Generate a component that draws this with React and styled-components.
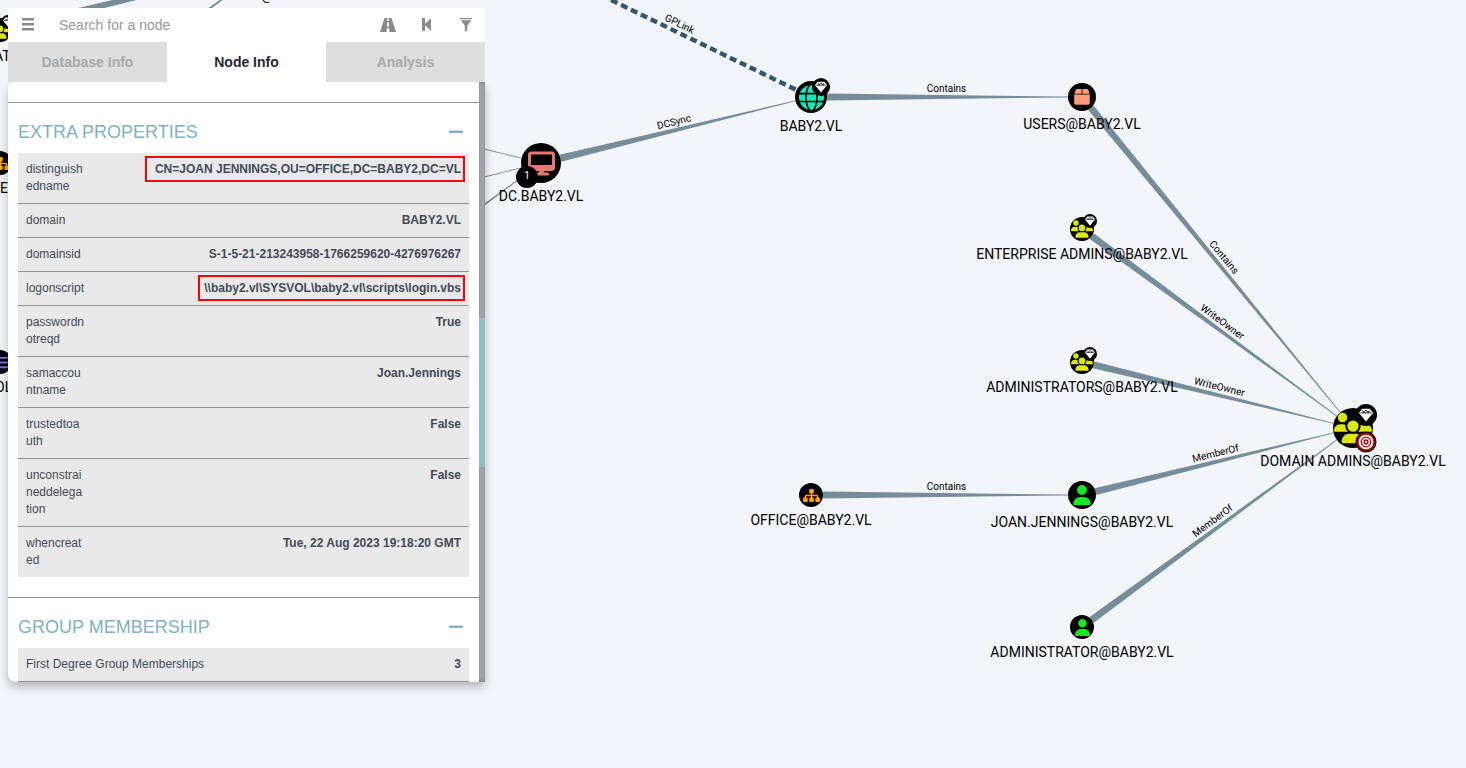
import React from "react";
import styled, { createGlobalStyle } from "styled-components";
import {
  FaDesktop,
  FaGlobe,
  FaList,
  FaSitemap,
  FaUser,
  FaUsers
} from "react-icons/fa6";

function BoxIcon({ size }) {
  return (
    <svg width={size} height={size} viewBox="0 0 16 16" fill="currentColor">
      <path d="M3 0h4.600v4.700H.4L1.600 1Q2 0 3 0zM8.400 0H13q1 0 1.400 1l1.200 3.700H8.400z" />
      <path d="M.2 5.500h15.600V14q0 1.800-1.800 1.800H2Q.2 15.800.2 14z" />
    </svg>
  );
}

function GemIcon({ size }) {
  return (
    <svg width={size} height={size} viewBox="0 0 14 14">
      <path fill="#fff" d="M3 .8h8L14 5 7 13.500 0 5z" />
      <path
        fill="none"
        stroke="#000"
        strokeWidth="0.9"
        d="M1.500 4.900h11M3.500 2.200L4.700 4.700 7 2l2.300 2.700 1.200-2.500"
      />
    </svg>
  );
}

const nodes = [
  { id: "left-group", x: 0, y: 30, r: 12, icon: FaUsers, size: 22, color: "#dbe712", gem: 7 },
  { id: "left-ou", x: 0, y: 163, r: 12, icon: FaSitemap, size: 17, color: "#ffa500" },
  { id: "left-gpo", x: 0, y: 362, r: 12, icon: FaList, size: 15, color: "#7b68ee" },
  { id: "dc", x: 541, y: 163, r: 20, icon: FaDesktop, size: 27, color: "#e67873", label: "DC.BABY2.VL", count: 1 },
  { id: "domain", x: 811, y: 97, r: 16, icon: FaGlobe, size: 25, color: "#17e6b9", label: "BABY2.VL", gem: 9 },
  { id: "users", x: 1082, y: 97, r: 14, icon: BoxIcon, size: 16, color: "#ff9a7b", label: "USERS@BABY2.VL" },
  { id: "ea", x: 1082, y: 229, r: 12, icon: FaUsers, size: 22, color: "#dbe712", label: "ENTERPRISE ADMINS@BABY2.VL", gem: 7 },
  { id: "admins", x: 1082, y: 362, r: 12, icon: FaUsers, size: 22, color: "#dbe712", label: "ADMINISTRATORS@BABY2.VL", gem: 7 },
  { id: "da", x: 1353, y: 428, r: 20, icon: FaUsers, size: 38, color: "#dbe712", label: "DOMAIN ADMINS@BABY2.VL", gem: 11, target: true },
  { id: "office", x: 811, y: 495, r: 12, icon: FaSitemap, size: 17, color: "#ffa500", label: "OFFICE@BABY2.VL" },
  { id: "joan", x: 1082, y: 495, r: 14, icon: FaUser, size: 20, color: "#17e625", label: "JOAN.JENNINGS@BABY2.VL" },
  { id: "administrator", x: 1082, y: 627, r: 12, icon: FaUser, size: 17, color: "#17e625", label: "ADMINISTRATOR@BABY2.VL" }
];

// points outside the visible canvas that edges still run to
const anchors = {
  top: { x: 541, y: -100, r: 19 },
  policy: { x: 541, y: -34, r: 12 },
  lower: { x: 0, y: 296, r: 12 },
  middle: { x: 270, y: 362, r: 12 },
  upper: { x: 270, y: -36, r: 12 },
  behind: { x: 0, y: 163, r: 12 }
};

const edges = [
  { from: "left-group", to: "dc" },
  { from: "left-group", to: "top" },
  { from: "lower", to: "dc" },
  { from: "middle", to: "dc" },
  { from: "behind", to: "upper" },
  { from: "policy", to: "domain", label: "GPLink", dashed: true },
  { from: "dc", to: "domain", label: "DCSync" },
  { from: "domain", to: "users", label: "Contains" },
  { from: "users", to: "da", label: "Contains" },
  { from: "ea", to: "da", label: "WriteOwner" },
  { from: "admins", to: "da", label: "WriteOwner" },
  { from: "joan", to: "da", label: "MemberOf" },
  { from: "administrator", to: "da", label: "MemberOf" },
  { from: "office", to: "joan", label: "Contains" }
];

const clippedLabels = [
  { text: "AT", x: -6, y: 48 },
  { text: "E", x: 0, y: 180 },
  { text: "OL", x: -5, y: 379 },
  { text: "@", x: 261, y: -13 }
];

const properties = [
  { name: "distinguishedname", value: "CN=JOAN JENNINGS,OU=OFFICE,DC=BABY2,DC=VL", mark: 10 },
  { name: "domain", value: "BABY2.VL" },
  { name: "domainsid", value: "S-1-5-21-213243958-1766259620-4276976267" },
  { name: "logonscript", value: "\\\\baby2.vl\\SYSVOL\\baby2.vl\\scripts\\login.vbs", mark: 6 },
  { name: "passwordnotreqd", value: "True" },
  { name: "samaccountname", value: "Joan.Jennings" },
  { name: "trustedtoauth", value: "False" },
  { name: "unconstraineddelegation", value: "False" },
  { name: "whencreated", value: "Tue, 22 Aug 2023 19:18:20 GMT" }
];

const findNode = id => nodes.find(node => node.id === id) || anchors[id];

function Edge({ from, to, label, dashed }) {
  const a = findNode(from);
  const b = findNode(to);
  const length = Math.hypot(b.x - a.x, b.y - a.y);
  const ux = (b.x - a.x) / length;
  const uy = (b.y - a.y) / length;
  const angle = (Math.atan2(uy, ux) * 180) / Math.PI;
  const x1 = a.x + ux * a.r;
  const y1 = a.y + uy * a.r;
  const x2 = b.x - ux * b.r;
  const y2 = b.y - uy * b.r;
  const wide = 3.5;
  const thin = 0.4;
  const points = [
    [x1 - uy * wide, y1 + ux * wide],
    [x2 - uy * thin, y2 + ux * thin],
    [x2 + uy * thin, y2 - ux * thin],
    [x1 + uy * wide, y1 - ux * wide]
  ].join(" ");
  return (
    <g>
      {dashed ? (
        <DashedLine x1={x1} y1={y1} x2={x2} y2={y2} />
      ) : (
        <Taper points={points} />
      )}
      {label && (
        <EdgeLabel
          transform={`translate(${(a.x + b.x) / 2} ${(a.y + b.y) / 2}) rotate(${angle})`}
          y="-5"
        >
          {label}
        </EdgeLabel>
      )}
    </g>
  );
}

function Node({ x, y, r, icon: Icon, size, color, label, gem, target, count }) {
  return (
    <NodeWrapper style={{ left: x, top: y - r }}>
      <Disc $r={r} $color={color}>
        <Icon size={size} />
        {gem && (
          <GemBadge $r={gem} $offset={r}>
            <GemIcon size={gem + 3} />
          </GemBadge>
        )}
        {target && (
          <TargetBadge viewBox="0 0 22 22" aria-hidden="true">
            <circle cx="11" cy="11" r="10.5" fill="#000" />
            <circle cx="11" cy="11" r="9.6" fill="#a3070c" />
            <circle cx="11" cy="11" r="6.4" fill="none" stroke="#fff" strokeWidth="1.9" />
            <circle cx="11" cy="11" r="3.4" fill="none" stroke="#fff" strokeWidth="1.5" />
            <circle cx="11" cy="11" r="1.2" fill="#fff" />
          </TargetBadge>
        )}
        {count && <CountBadge>{count}</CountBadge>}
      </Disc>
      {label && <NodeLabel>{label}</NodeLabel>}
    </NodeWrapper>
  );
}

function Section({ title, children }) {
  return (
    <SectionWrapper>
      <SectionHeader>
        <h2>{title}</h2>
        <CollapseButton aria-label={`Collapse ${title}`} />
      </SectionHeader>
      {children}
    </SectionWrapper>
  );
}

export default function App() {
  return (
    <Canvas>
      <GlobalStyle />
      <EdgeLayer>
        {edges.map(edge => (
          <Edge key={`${edge.from}-${edge.to}`} {...edge} />
        ))}
      </EdgeLayer>
      {nodes.map(({ id, ...node }) => (
        <Node key={id} {...node} />
      ))}
      {clippedLabels.map(({ text, x, y }) => (
        <LooseLabel key={text} style={{ left: x, top: y }}>
          {text}
        </LooseLabel>
      ))}
      <SidePanel>
        <SearchBar>
          <IconButton aria-label="Menu">
            <svg width="12" height="13" viewBox="0 0 12 13">
              <path d="M0 0h12v2.400H0zM0 5h12v2.400H0zM0 10h12v2.400H0z" />
            </svg>
          </IconButton>
          <SearchInput type="text" aria-label="Search for a node" placeholder="Search for a node" />
          <IconButton aria-label="Pathfinding">
            <svg width="16" height="14" viewBox="0 0 16 14">
              <path d="M4.500 0h2.900L7.200 3h1.600L8.600 0h2.900L16 14H9.400L9.100 10H6.900L6.600 14H0zM7.200 4.200L7 8.500h2L8.800 4.200z" />
            </svg>
          </IconButton>
          <IconButton aria-label="Back">
            <svg width="10" height="13" viewBox="0 0 10 13">
              <path d="M0 0h3v5.700L9 .3v12.400L3 7.300V13H0z" />
            </svg>
          </IconButton>
          <IconButton aria-label="Filter">
            <svg width="12" height="14" viewBox="0 0 12 14">
              <path d="M0 0h12v1.200H0zM.8 2.200h10.400L7.400 7.500v4.500L4.800 14V7.500z" />
            </svg>
          </IconButton>
        </SearchBar>
        <Tabs>
          <Tab>Database Info</Tab>
          <Tab $active>Node Info</Tab>
          <Tab>Analysis</Tab>
        </Tabs>
        <PanelBody>
          <PanelContent>
            <Section title="EXTRA PROPERTIES">
              <PropertyTable>
                <tbody>
                  {properties.map(({ name, value, mark }) => (
                    <tr key={name}>
                      <NameCell $narrow scope="row">{name}</NameCell>
                      <ValueCell>{mark ? <Marked $left={mark}>{value}</Marked> : value}</ValueCell>
                    </tr>
                  ))}
                </tbody>
              </PropertyTable>
            </Section>
            <Section title="GROUP MEMBERSHIP">
              <PropertyTable $ruled>
                <tbody>
                  <tr>
                    <NameCell scope="row">First Degree Group Memberships</NameCell>
                    <ValueCell>3</ValueCell>
                  </tr>
                </tbody>
              </PropertyTable>
            </Section>
          </PanelContent>
          <ScrollTrack>
            <ScrollThumb />
          </ScrollTrack>
        </PanelBody>
      </SidePanel>
    </Canvas>
  );
}

const GlobalStyle = createGlobalStyle`
  * {
    box-sizing: border-box;
  }
  body {
    margin: 0;
    background: #f2f5fa;
    font-family: "Liberation Sans", Arial, sans-serif;
  }
`;

const Canvas = styled.main`
  position: relative;
  min-height: 100vh;
  padding: 8px;
  overflow: hidden;
`;

const EdgeLayer = styled.svg`
  position: absolute;
  inset: 0;
  width: 100%;
  height: 100%;
`;

const Taper = styled.polygon`
  fill: #768d99;
`;

const DashedLine = styled.line`
  stroke: #34566a;
  stroke-width: 4.4;
  stroke-dasharray: 7 4;
`;

const EdgeLabel = styled.text`
  font-family: Roboto, sans-serif;
  font-size: 10px;
  text-anchor: middle;
  fill: #000;
`;

const NodeWrapper = styled.div`
  position: absolute;
  display: flex;
  flex-direction: column;
  align-items: center;
  width: 0;
`;

const Disc = styled.div`
  position: relative;
  display: flex;
  flex-shrink: 0;
  align-items: center;
  justify-content: center;
  width: ${({ $r }) => $r * 2}px;
  height: ${({ $r }) => $r * 2}px;
  border-radius: 50%;
  background: #000;
  color: ${({ $color }) => $color};
  svg {
    flex-shrink: 0;
  }
`;

const GemBadge = styled.span`
  position: absolute;
  left: ${({ $r, $offset }) => Math.floor($offset * 1.68) - $r}px;
  top: ${({ $r, $offset }) => Math.ceil($offset * 0.32) - $r}px;
  display: flex;
  align-items: center;
  justify-content: center;
  width: ${({ $r }) => $r * 2}px;
  height: ${({ $r }) => $r * 2}px;
  border-radius: 50%;
  background: #000;
  color: #fff;
`;

const TargetBadge = styled.svg`
  position: absolute;
  right: -4px;
  bottom: -5px;
  width: 22px;
  height: 22px;
`;

const CountBadge = styled.span`
  position: absolute;
  left: -5px;
  bottom: -5px;
  width: 22px;
  height: 22px;
  border-radius: 50%;
  background: #000;
  color: #fff;
  font: 10px/20px Roboto, sans-serif;
  text-align: center;
`;

const NodeLabel = styled.span`
  margin-top: 5px;
  color: #000;
  font: 14px/16px Roboto, sans-serif;
  white-space: nowrap;
`;

const LooseLabel = styled(NodeLabel)`
  position: absolute;
  margin: 0;
`;

const SidePanel = styled.aside`
  position: relative;
  width: 477px;
  max-width: 100%;
`;

const SearchBar = styled.div`
  display: flex;
  height: 34px;
  background: #fff;
`;

const IconButton = styled.button`
  display: flex;
  align-items: center;
  justify-content: center;
  width: 39px;
  padding: 0 0 1px;
  border: 0;
  background: none;
  svg {
    fill: #888a92;
  }
`;

const SearchInput = styled.input`
  flex: 1;
  min-width: 0;
  padding: 0 12px;
  border: 0;
  background: none;
  font: 14px "Liberation Sans", Arial, sans-serif;
  &::placeholder {
    color: #999;
  }
`;

const Tabs = styled.div`
  display: flex;
  height: 40px;
`;

const Tab = styled.button`
  flex: 1;
  padding: 0;
  border: 0;
  background: ${({ $active }) => ($active ? "#fff" : "#dedede")};
  color: ${({ $active }) => ($active ? "#1d2735" : "#a8aaad")};
  font: bold 14px "Liberation Sans", Arial, sans-serif;
`;

const PanelBody = styled.div`
  display: flex;
  border-radius: 8px 0 0 8px;
  background: #fff;
  box-shadow: 0 5px 10px rgba(0, 0, 0, 0.25);
  clip-path: inset(0 -20px -20px -20px);
`;

const PanelContent = styled.div`
  flex: 1;
  padding-top: 20px;
  border-radius: 8px 0 0 8px;
  overflow: hidden;
`;

const ScrollTrack = styled.div`
  display: flex;
  flex-direction: column;
  width: 6px;
  background: #a9aeb4;
  box-shadow: inset 0 0 4px rgba(0, 0, 0, 0.3);
  &::before {
    content: "";
    flex: 236;
  }
  &::after {
    content: "";
    flex: 215;
  }
`;

const ScrollThumb = styled.div`
  flex: 149;
  background: #8fc1c4;
`;

const SectionWrapper = styled.section`
  border-top: 1px solid #8f9296;
  & + & {
    margin-top: 20px;
  }
`;

const SectionHeader = styled.div`
  display: flex;
  align-items: center;
  justify-content: space-between;
  height: 50px;
  padding: 8px 16px 0 10px;
  h2 {
    margin: 0;
    color: #7fb0c6;
    font-size: 18px;
    font-weight: normal;
  }
`;

const CollapseButton = styled.button`
  width: 14px;
  height: 4px;
  padding: 0;
  border: 0;
  border-top: 1px solid #c4dbe6;
  border-bottom: 1px solid #fff;
  background: #7fb0c6;
`;

const PropertyTable = styled.table`
  width: calc(100% - 20px);
  margin: 0 10px;
  border-spacing: 0;
  background: #e9e9e9;
  color: #424a57;
  font-size: 12px;
  line-height: 17px;
  th,
  td {
    padding: 8px;
    border-bottom: 1px solid #8f9296;
    vertical-align: top;
  }
  tr:last-child th,
  tr:last-child td {
    border-bottom-width: ${({ $ruled }) => ($ruled ? "1px" : "0")};
  }
`;

const NameCell = styled.th`
  width: ${({ $narrow }) => ($narrow ? "75px" : "auto")};
  font-weight: normal;
  text-align: left;
  word-break: ${({ $narrow }) => ($narrow ? "break-all" : "normal")};
`;

const ValueCell = styled.td`
  font-weight: bold;
  text-align: right;
`;

const Marked = styled.span`
  position: relative;
  display: inline-block;
  &::after {
    content: "";
    position: absolute;
    inset: -5px -4px -4px -${({ $left }) => $left}px;
    border: 2px solid #f00;
  }
`;
